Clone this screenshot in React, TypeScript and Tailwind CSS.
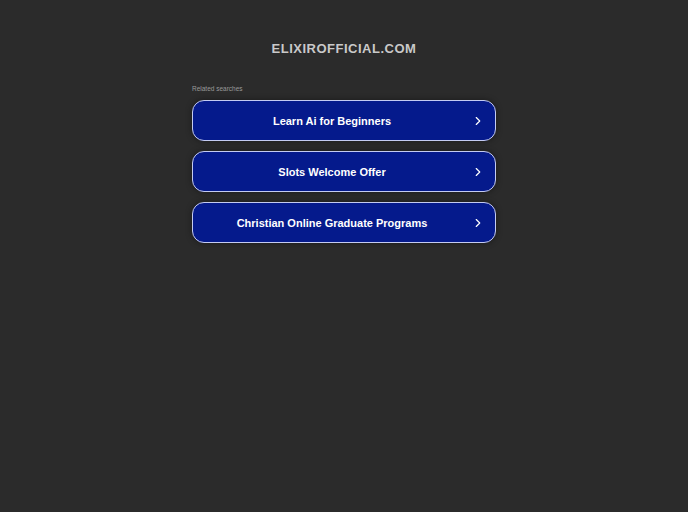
import { ChevronRight } from "lucide-react";

const searches = ["Learn Ai for Beginners", "Slots Welcome Offer", "Christian Online Graduate Programs"];

export default function App() {
  return (
    <div className="min-h-[512px] w-full bg-[#2b2b2b] font-['Liberation_Sans',Arial,sans-serif]">
      <div className="flex flex-col items-center pt-[40px]">
        <h1 className="text-[13px] font-bold leading-[18px] tracking-[0.5px] text-[#c9c9c9]">ELIXIROFFICIAL.COM</h1>
        <div className="mt-[26px] w-[304px]">
          <p className="text-[6.5px] leading-[10px] text-[#9a9a9a]">Related searches</p>
          <div className="mt-[6px] flex flex-col gap-[10px]">
            {searches.map((s) => (
              <a
                key={s}
                href="#"
                className="flex h-[41px] items-center rounded-[12px] border border-[#c4cbf2] bg-[#051a8c] pl-[12px] pr-[10px] pt-[1px] text-[11px] font-bold text-white shadow-[0_0_6px_rgba(0,0,0,0.4)]"
              >
                <span className="mr-[12px] flex-1 text-center">{s}</span>
                <ChevronRight className="h-[14px] w-[14px]" strokeWidth={2} />
              </a>
            ))}
          </div>
        </div>
      </div>
    </div>
  );
}
